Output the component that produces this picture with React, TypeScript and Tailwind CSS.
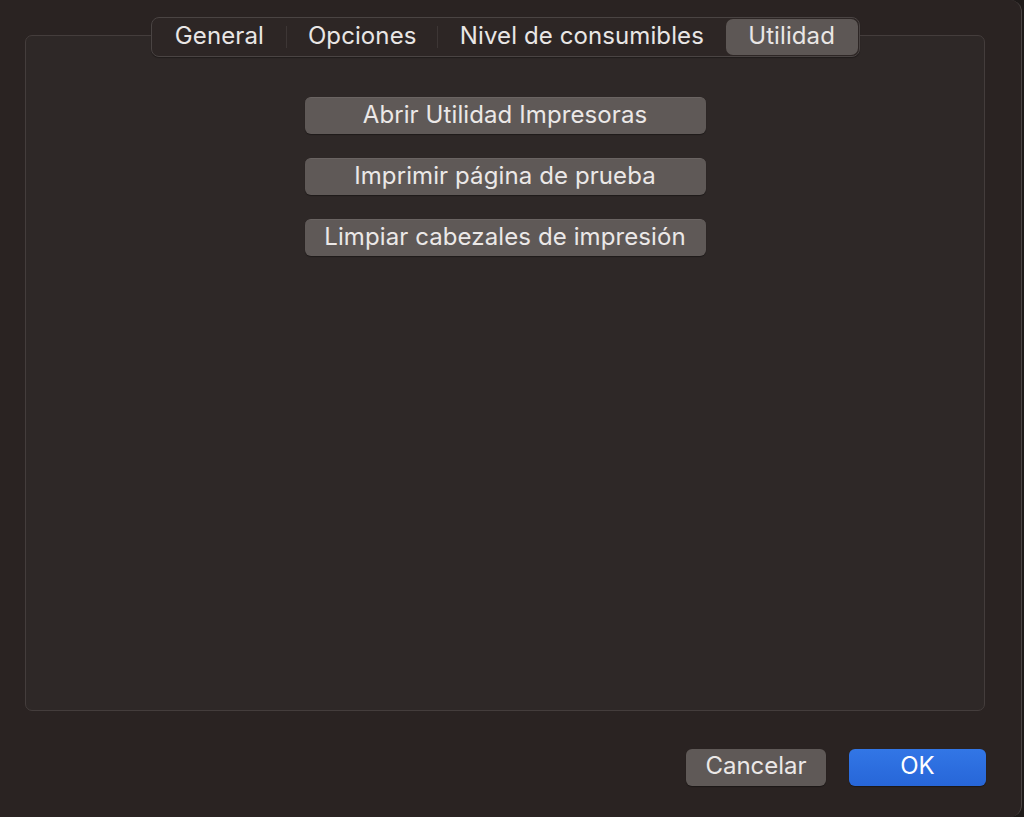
import React from "react";

const tabs = ["General", "Opciones", "Nivel de consumibles", "Utilidad"];
const actions = [
  "Abrir Utilidad Impresoras",
  "Imprimir página de prueba",
  "Limpiar cabezales de impresión",
];

export default function App() {
  const selected = 3;
  return (
    <div
      className="w-[1024px] h-[817px] bg-[#1e1a19] overflow-hidden"
      style={{ fontFamily: "Inter, 'Noto Sans', sans-serif" }}
    >
      <div className="relative w-[1022px] h-[817px] bg-[#2a2322] rounded-r-[12px] border-r border-[#4a4443] pt-[35px] pl-[25px] pr-[36px]">
        {/* Tab panel */}
        <div className="h-[676px] rounded-[7px] border border-[#443d3c] bg-[#2e2827] flex flex-col items-center">
          <div className="-mt-[19px] h-[40px] w-[709px] flex items-center rounded-[8px] border border-[#4a4443] bg-[#2d2625] p-[1px] shadow-[0_1px_1px_rgba(0,0,0,0.3)]">
            {tabs.map((t, i) => (
              <React.Fragment key={t}>
                {i > 0 && i !== selected && i - 1 !== selected && (
                  <div className="w-px h-[22px] bg-[#3d3635]" />
                )}
                <div
                  className={`h-full flex items-center justify-center pb-[3px] text-[24px] tracking-[0.1px] text-[#e9e6e5] ${
                    i === selected
                      ? "bg-[#5d5755] rounded-[7px] w-[132px] ml-auto"
                      : i === 0
                      ? "w-[134px]"
                      : i === 1
                      ? "w-[150px]"
                      : "w-[288px]"
                  }`}
                >
                  {t}
                </div>
              </React.Fragment>
            ))}
          </div>
          <div className="mt-[40px] flex flex-col gap-[24px]">
            {actions.map((a) => (
              <button
                key={a}
                className="w-[401px] h-[37px] rounded-[6px] bg-[#5f5957] pb-[3px] text-[24px] tracking-[0.1px] text-[#ebe8e7] flex items-center justify-center shadow-[0_1px_1px_rgba(0,0,0,0.35)] border-t border-[#6a6462]"
              >
                {a}
              </button>
            ))}
          </div>
        </div>

        {/* Footer buttons */}
        <div className="mt-[38px] -mr-px flex justify-end gap-[23px]">
          <button className="w-[140px] h-[37px] rounded-[6px] bg-[#5f5957] pb-[3px] text-[24px] text-[#ebe8e7] flex items-center justify-center shadow-[0_1px_1px_rgba(0,0,0,0.35)]">
            Cancelar
          </button>
          <button className="w-[137px] h-[37px] rounded-[6px] pb-[3px] text-[24px] text-white flex items-center justify-center shadow-[0_1px_1px_rgba(0,0,0,0.35)] bg-gradient-to-b from-[#3276e6] to-[#2766d8]">
            OK
          </button>
        </div>
      </div>
    </div>
  );
}
